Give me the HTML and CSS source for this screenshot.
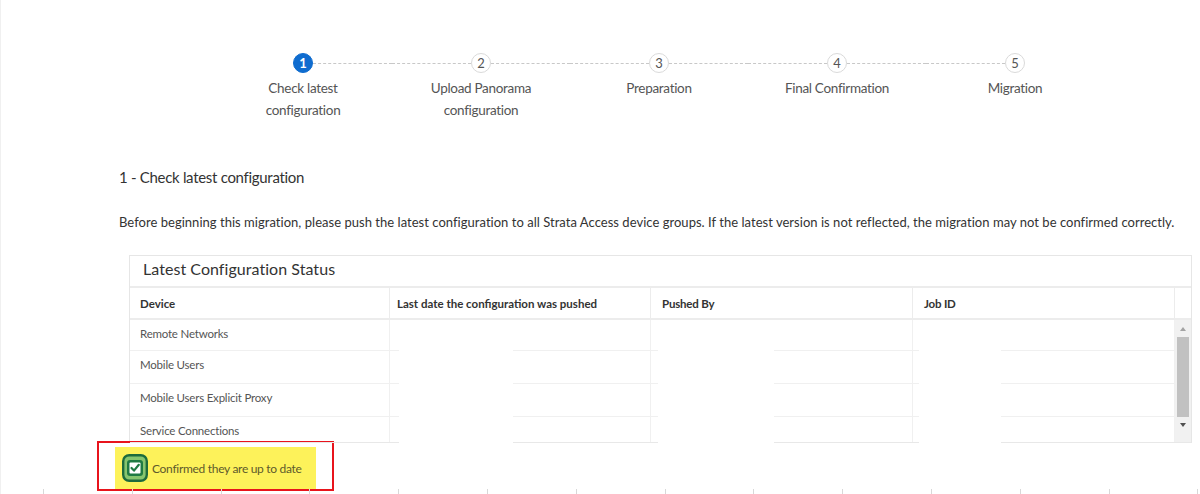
FILE: index.html
```html
<!DOCTYPE html>
<html>
<head>
<meta charset="utf-8">
<link rel="stylesheet" href="styles.css">
</head>
<body>
<div class="page">
  <div class="stepper">
    <div class="step first active">
      <div class="step-head"><span class="line"></span><span class="circle">1</span><span class="line"></span></div>
      <div class="step-label">Check latest<br>configuration</div>
    </div>
    <div class="step">
      <div class="step-head"><span class="line"></span><span class="circle">2</span><span class="line"></span></div>
      <div class="step-label">Upload Panorama<br>configuration</div>
    </div>
    <div class="step">
      <div class="step-head"><span class="line"></span><span class="circle">3</span><span class="line"></span></div>
      <div class="step-label">Preparation</div>
    </div>
    <div class="step">
      <div class="step-head"><span class="line"></span><span class="circle">4</span><span class="line"></span></div>
      <div class="step-label">Final Confirmation</div>
    </div>
    <div class="step last">
      <div class="step-head"><span class="line"></span><span class="circle">5</span><span class="line"></span></div>
      <div class="step-label">Migration</div>
    </div>
  </div>

  <h2 class="section-title">1 - Check latest configuration</h2>
  <p class="intro">Before beginning this migration, please push the latest configuration to all Strata Access device groups. If the latest version is not reflected, the migration may not be confirmed correctly.</p>

  <div class="status-table">
    <div class="table-title">Latest Configuration Status</div>
    <div class="table-head">
      <div class="th">Device</div>
      <div class="th th2">Last date the configuration was pushed</div>
      <div class="th th3">Pushed By</div>
      <div class="th th3">Job ID</div>
      <div class="th th-scroll"></div>
    </div>
    <div class="table-body">
      <div class="rows">
        <div class="tr"><div class="td">Remote Networks</div><div class="td"></div><div class="td"></div><div class="td"></div></div>
        <div class="tr"><div class="td">Mobile Users</div><div class="td"></div><div class="td"></div><div class="td"></div></div>
        <div class="tr"><div class="td">Mobile Users Explicit Proxy</div><div class="td"></div><div class="td"></div><div class="td"></div></div>
        <div class="tr"><div class="td">Service Connections</div><div class="td"></div><div class="td"></div><div class="td"></div></div>
        <div class="tr"><div class="td"></div><div class="td"></div><div class="td"></div><div class="td"></div></div>
      </div>
      <div class="scrollbar">
        <span class="arrow up"></span>
        <span class="thumb"></span>
        <span class="arrow down"></span>
      </div>
      <span class="redact r1"></span>
      <span class="redact r2"></span>
      <span class="redact r3"></span>
    </div>
  </div>

  <div class="confirm-box">
    <div class="confirm-hl">
      <svg class="cb" width="26" height="28" viewBox="0 0 26 28">
        <rect x="1.2" y="1.2" width="23.6" height="25.6" rx="6" fill="#86c56e" stroke="#1d6b3c" stroke-width="2.4"/>
        <rect x="5" y="6" width="16" height="16" rx="3" fill="#1f7a43"/>
        <rect x="7.5" y="8.5" width="11" height="11" rx="1" fill="#ffffff"/>
        <path d="M9.5 14 L12 16.6 L16.8 10.8" fill="none" stroke="#1f7a43" stroke-width="2.2" stroke-linecap="round" stroke-linejoin="round"/>
      </svg>
      <span class="confirm-text">Confirmed they are up to date</span>
    </div>
  </div>
</div>
<div class="ticks"></div>
</body>
</html>
```
FILE: styles.css
```css
html, body {
  margin: 0;
  padding: 0;
  background: #ffffff;
}
body {
  font-family: Lato, "Open Sans", "Liberation Sans", sans-serif;
  color: #333333;
  width: 1200px;
  height: 494px;
  overflow: hidden;
  position: relative;
  border-left: 1px solid #f0f0f0;
  box-sizing: border-box;
}
.page {
  padding-top: 53px;
}

/* Stepper */
.stepper {
  display: grid;
  grid-template-columns: repeat(5, 178px);
  margin-left: 213px;
}
.step {
  display: flex;
  flex-direction: column;
  align-items: center;
}
.step-head {
  display: flex;
  align-items: center;
  width: 100%;
  height: 20px;
}
.line {
  flex: 1;
  height: 0;
  border-top: 1px dashed #c8c8c8;
}
.step.first .line:first-child,
.step.last .line:last-child {
  border-top-color: transparent;
}
.circle {
  width: 18px;
  height: 18px;
  border: 1px solid #dadada;
  border-radius: 50%;
  display: flex;
  align-items: center;
  justify-content: center;
  font-size: 13px;
  color: #555555;
  background: #ffffff;
}
.step.active .circle {
  background: #0f6ccf;
  border-color: #0f6ccf;
  color: #ffffff;
  font-weight: 700;
}
.step-label {
  margin-top: 4px;
  font-size: 13.5px;
  line-height: 22px;
  color: #555555;
  text-align: center;
  letter-spacing: -0.3px;
}

/* Section */
.section-title {
  margin: 46px 0 0 118px;
  font-size: 15px;
  line-height: 20px;
  font-weight: 400;
  color: #333333;
  letter-spacing: -0.3px;
}
.intro {
  margin: 26px 0 0 118px;
  font-size: 13px;
  line-height: 18px;
  color: #333333;
  letter-spacing: 0.03px;
  white-space: nowrap;
}

/* Table */
.status-table {
  margin: 24px 0 0 128px;
  width: 1063px;
  border: 1px solid #e6e6e6;
  border-bottom: none;
  box-sizing: border-box;
}
.table-title {
  height: 30px;
  line-height: 25px;
  padding-left: 13px;
  font-size: 16px;
  color: #333333;
  border-bottom: 2px solid #ececec;
  letter-spacing: 0.05px;
}
.table-head {
  display: grid;
  grid-template-columns: 260px 261px 262px 262px 16px;
  height: 30px;
  border-bottom: 2px solid #ececec;
}
.th {
  padding-left: 10px;
  font-size: 11.5px;
  font-weight: 700;
  line-height: 31px;
  color: #333333;
  border-right: 1px solid #ececec;
  letter-spacing: 0;
}
.th2 { padding-left: 7px; }
.th3 { padding-left: 11px; letter-spacing: -0.2px; }
.th-scroll { border-right: none; padding: 0; }

.table-body {
  display: flex;
  height: 122px;
  position: relative;
  border-bottom: 1px solid #e8e8e8;
}
.rows {
  width: 1045px;
  height: 122px;
  overflow: hidden;
}
.tr {
  display: grid;
  grid-template-columns: 260px 261px 262px 262px;
  height: 33px;
  border-bottom: 1px solid #f0f0f0;
  box-sizing: border-box;
}
.tr:first-child {
  height: 31px;
}
.td {
  padding-left: 10px;
  font-size: 11.5px;
  line-height: 28px;
  color: #555555;
  border-right: 1px solid #f0f0f0;
  letter-spacing: -0.2px;
}
.scrollbar {
  width: 16px;
  background: #f1f1f1;
  display: flex;
  flex-direction: column;
  align-items: center;
}
.arrow {
  width: 0;
  height: 0;
  border-left: 3.5px solid transparent;
  border-right: 3.5px solid transparent;
}
.arrow.up {
  margin-top: 7px;
  border-bottom: 4px solid #a3a3a3;
}
.arrow.down {
  margin-top: 6px;
  border-top: 4px solid #505050;
}
.thumb {
  width: 12px;
  height: 80px;
  margin-top: 6px;
  background: #c1c1c1;
}
.redact {
  position: absolute;
  top: 0;
  height: 126px;
  background: #ffffff;
}
.r1 { left: 269px; width: 114px; }
.r2 { left: 528px; width: 116px; }
.r3 { left: 789px; width: 82px; }

/* Confirm */
.confirm-box {
  margin: -2px 0 0 96px;
  width: 237px;
  height: 50px;
  border: 2px solid #e8141c;
  box-sizing: border-box;
  padding: 4px 16px 0 16px;
}
.confirm-hl {
  height: 42px;
  background: #fdf25a;
  display: flex;
  align-items: center;
  padding-left: 7px;
}
.cb {
  flex: none;
}
.confirm-text {
  margin-left: 4px;
  font-size: 12px;
  color: #5d5a2c;
  letter-spacing: -0.3px;
}

.ticks {
  position: absolute;
  left: 0;
  right: 0;
  bottom: 0;
  height: 5px;
  background: repeating-linear-gradient(to right, #d8d8d8 0 1px, transparent 1px 88.8px);
  background-position: 42px 0;
}
```
